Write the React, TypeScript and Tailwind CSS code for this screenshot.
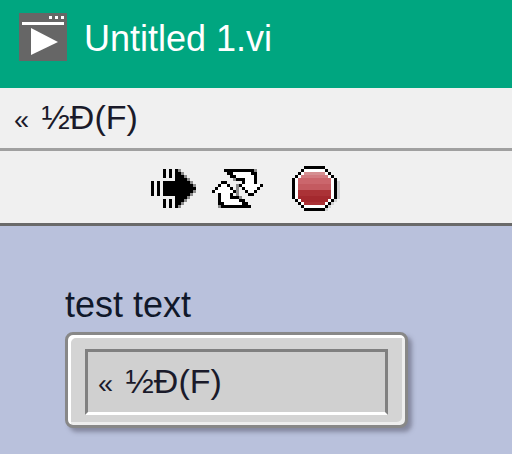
const sans = 'font-["Liberation_Sans",Arial,sans-serif]';

const CELL_COLORS: Record<string, string> = {
  '#': '#000000',
  G: '#8c8c8c',
  g: '#d2d2d2',
  W: '#ffffff',
  a: '#d58f91',
  b: '#d27b80',
  c: '#cb666c',
  d: '#c45a60',
  e: '#ab3236',
  f: '#a4292e',
};

// icons are drawn on a 3px grid like the scaled up bitmaps in the picture
function PixelIcon({ rows }: { rows: string[] }) {
  const cols = rows[0].length;
  return (
    <svg
      width={cols * 3}
      height={rows.length * 3}
      viewBox={`0 0 ${cols * 3} ${rows.length * 3}`}
      shapeRendering="crispEdges"
      className="shrink-0"
    >
      {rows.map((row, y) =>
        row.split('').map((ch, x) =>
          CELL_COLORS[ch] ? (
            <rect key={`${x}-${y}`} x={x * 3} y={y * 3} width="3" height="3" fill={CELL_COLORS[ch]} />
          ) : null,
        ),
      )}
    </svg>
  );
}

const RUN_ARROW = [
  '....#.#.#G.....',
  '....#.#.##G....',
  '....#.#.###G...',
  '........####G..',
  '#.#.#########G.',
  '#.#.##########G',
  '#.#.###########',
  '#.#.##########G',
  '#.#.#########G.',
  '........####G..',
  '....#.#.###G...',
  '....#.#.##G....',
  '....#.#.#G.....',
];

const RUN_CONTINUOUS = [
  '....##########G..',
  '.....##WWWWWW##..',
  '......##WWWWWW#..',
  '.......G###WWW#..',
  '...##.....#WWW#..',
  '..#WW#..G#WWWWWW#',
  '.#WWWW#.G.#WWWW#.',
  '#WWWWWW#G..#WW#..',
  '..#WWW#.G...##...',
  '..#WWW###G.......',
  '..#WWWWWW##......',
  '..##WWWWWW##.....',
  '..G##########....',
];

const STOP = [
  '....#######.....',
  '...#WWWWWWW#....',
  '..#WaaaaaaaW#...',
  '.#WbbbbbbbbbW#..',
  '#WcccccccccccW#.',
  '#WcccccccccccW#g',
  '#WdddddddddddW#g',
  '#WdddddddddddW#g',
  '#WeeeeeeeeeeeW#g',
  '#WeeeeeeeeeeeW#g',
  '#WfffffffffffW#g',
  '.#WfffffffffW#g.',
  '..#WeeeeeeeW#g..',
  '...#WWWWWWW#g...',
  '....#######g....',
];

function ViIcon() {
  return (
    <svg width="48" height="48" viewBox="0 0 48 48" className="shrink-0">
      <rect width="48" height="48" fill="#666666" />
      <rect x="30" y="3" width="3" height="3" fill="#fff" />
      <rect x="36" y="3" width="3" height="3" fill="#fff" />
      <rect x="42" y="3" width="3" height="3" fill="#fff" />
      <rect x="3" y="9" width="42" height="3" fill="#fff" />
      <path d="M12 15 L39 29 L12 42 Z" fill="#fff" />
    </svg>
  );
}

function GarbledLabel() {
  return (
    <span className="text-[34px] leading-[40px] text-[#1a1a2a]">
      <span className="mr-[3px] text-[27px]">«</span> ½Ð(F)
    </span>
  );
}

export default function App() {
  return (
    <div className={`flex h-[454px] w-[512px] flex-col overflow-hidden bg-[#b9c1dc] ${sans}`}>
      <div className="flex h-[88px] items-start gap-[17px] bg-[#00a680] pl-[19px] pt-[13px]">
        <ViIcon />
        <span className="text-[36px] leading-[52px] text-white">Untitled 1.vi</span>
      </div>
      <div className="flex h-[63px] items-center border-b-[3px] border-[#a0a0a0] bg-[#f0f0f0] pl-[14px]">
        <GarbledLabel />
      </div>
      <div className="flex h-[75px] items-center gap-[16px] border-b-[3px] border-[#696969] bg-[#f0f0f0] pl-[151px] pt-[3px]">
        <PixelIcon rows={RUN_ARROW} />
        <PixelIcon rows={RUN_CONTINUOUS} />
        <div className="ml-[13px]">
          <PixelIcon rows={STOP} />
        </div>
      </div>
      <div className="pl-[65px] pt-[58px]">
        <div className="text-[36px] leading-[42px] text-[#10182a]">test text</div>
        <div className="mt-[6px] h-[96px] w-[343px] rounded-[8px] border-[3px] border-[#888888] bg-[#d4d4d4] pl-[17px] pt-[14px] shadow-[4px_4px_4px_rgba(90,90,110,0.55),inset_3px_3px_0_#fff,inset_-3px_-3px_0_#eee]">
          <div className="flex h-[66px] w-[303px] items-center border-[3px] border-[#808080] border-b-white bg-[#d0d0d0] pl-[10px]">
            <GarbledLabel />
          </div>
        </div>
      </div>
    </div>
  );
}
